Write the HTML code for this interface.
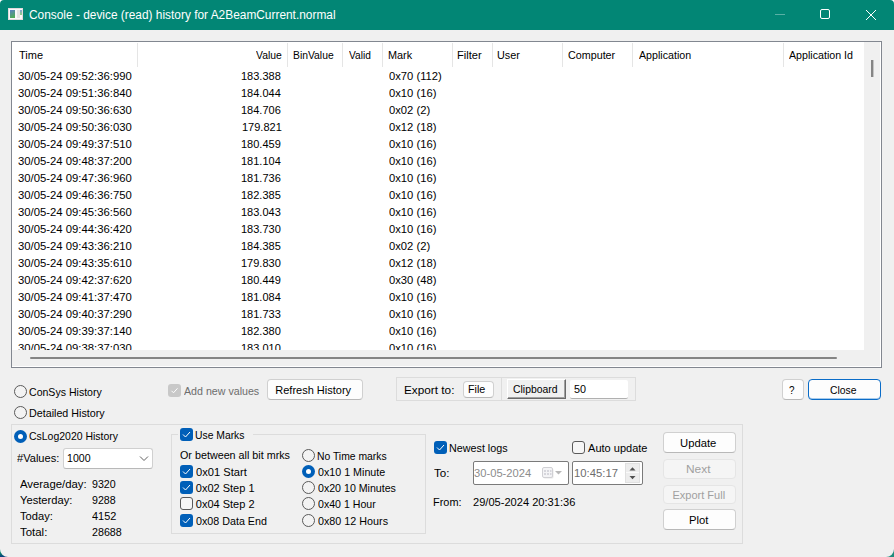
<!DOCTYPE html>
<html><head><meta charset="utf-8"><style>
*{box-sizing:border-box;margin:0;padding:0}
html,body{width:894px;height:557px;overflow:hidden;background:#f0f0f0}
body{position:relative;font-family:"Liberation Sans",sans-serif;font-size:11px;line-height:13px;color:#000}
.a{position:absolute}
.t{position:absolute;white-space:pre;transform-origin:0 0}
.lv{position:absolute;left:11px;top:41px;width:871px;height:327px;border:1px solid #828790;background:#fff}
.sep{position:absolute;top:43px;width:1px;height:24px;background:#e5e5e5}
.btn{position:absolute;background:#fdfdfd;border:1px solid #d0d0d0;border-bottom-color:#b8b8b8;border-radius:4px}
.grp{position:absolute;border:1px solid #dcdcdc}
.cb{position:absolute;width:13px;height:13px;border-radius:3px}
.cbon{background:#005fb8}
.cboff{border:1px solid #5a5a5a;background:#f6f6f6}
.rd{position:absolute;width:13px;height:13px;border-radius:50%;border:1px solid #5a5a5a;background:#f3f3f3}
.rdon{background:#005fb8;border:none}
.rdon::after{content:"";position:absolute;left:4px;top:4px;width:5px;height:5px;border-radius:50%;background:#fff}
</style></head><body>
<div class="a" style="left:0;top:0;width:894px;height:30px;background:#028675"></div>
<svg class="a" style="left:8px;top:8px" width="15" height="12" viewBox="0 0 15 12">
<defs><linearGradient id="g1" x1="0" y1="0" x2="0.3" y2="1"><stop offset="0" stop-color="#5a7fc4"/><stop offset="1" stop-color="#4faa5a"/></linearGradient>
<linearGradient id="g2" x1="0" y1="0" x2="0" y2="1"><stop offset="0" stop-color="#7f9fd4"/><stop offset="1" stop-color="#8fd07f"/></linearGradient></defs>
<rect x="0.5" y="0.5" width="14" height="11" fill="#f9f9f9" stroke="#e2dadd"/>
<rect x="2" y="2" width="5" height="8" fill="url(#g1)"/>
<rect x="9" y="2" width="3" height="8" fill="#e4e4e4"/>
<rect x="12" y="2" width="2" height="5" fill="url(#g2)"/>
</svg>
<div class="a" style="left:775px;top:14px;width:10px;height:1px;background:rgba(255,255,255,0.35)"></div>
<div class="a" style="left:820px;top:9px;width:10px;height:10px;border:1px solid #fff;border-radius:2px"></div>
<svg class="a" style="left:865px;top:9px" width="12" height="12" viewBox="0 0 12 12"><path d="M1 1L11 11M11 1L1 11" stroke="#fff" stroke-width="1"/></svg>
<div class="lv"></div>
<div class="sep" style="left:137px"></div>
<div class="sep" style="left:287px"></div>
<div class="sep" style="left:342px"></div>
<div class="sep" style="left:382px"></div>
<div class="sep" style="left:452px"></div>
<div class="sep" style="left:492px"></div>
<div class="sep" style="left:562px"></div>
<div class="sep" style="left:632px"></div>
<div class="sep" style="left:783px"></div>
<div class="a" style="left:12px;top:42px;width:852px;height:308px;overflow:hidden">
<div class="t" style="left:5.97px;top:28px;transform:scaleX(1.0275)">30/05-24 09:52:36:990</div>
<div class="t" style="left:229.00px;top:28px">183.388</div>
<div class="t" style="left:376.70px;top:28px;transform:scaleX(1.0200)">0x70 (112)</div>
<div class="t" style="left:5.97px;top:45px;transform:scaleX(1.0275)">30/05-24 09:51:36:840</div>
<div class="t" style="left:229.00px;top:45px">184.044</div>
<div class="t" style="left:376.70px;top:45px;transform:scaleX(1.0200)">0x10 (16)</div>
<div class="t" style="left:5.97px;top:62px;transform:scaleX(1.0275)">30/05-24 09:50:36:630</div>
<div class="t" style="left:229.00px;top:62px">184.706</div>
<div class="t" style="left:376.70px;top:62px;transform:scaleX(1.0200)">0x02 (2)</div>
<div class="t" style="left:5.97px;top:79px;transform:scaleX(1.0275)">30/05-24 09:50:36:030</div>
<div class="t" style="left:230.00px;top:79px">179.821</div>
<div class="t" style="left:376.70px;top:79px;transform:scaleX(1.0200)">0x12 (18)</div>
<div class="t" style="left:5.97px;top:96px;transform:scaleX(1.0275)">30/05-24 09:49:37:510</div>
<div class="t" style="left:229.00px;top:96px">180.459</div>
<div class="t" style="left:376.70px;top:96px;transform:scaleX(1.0200)">0x10 (16)</div>
<div class="t" style="left:5.97px;top:113px;transform:scaleX(1.0275)">30/05-24 09:48:37:200</div>
<div class="t" style="left:229.00px;top:113px">181.104</div>
<div class="t" style="left:376.70px;top:113px;transform:scaleX(1.0200)">0x10 (16)</div>
<div class="t" style="left:5.97px;top:130px;transform:scaleX(1.0275)">30/05-24 09:47:36:960</div>
<div class="t" style="left:229.00px;top:130px">181.736</div>
<div class="t" style="left:376.70px;top:130px;transform:scaleX(1.0200)">0x10 (16)</div>
<div class="t" style="left:5.97px;top:147px;transform:scaleX(1.0275)">30/05-24 09:46:36:750</div>
<div class="t" style="left:229.00px;top:147px">182.385</div>
<div class="t" style="left:376.70px;top:147px;transform:scaleX(1.0200)">0x10 (16)</div>
<div class="t" style="left:5.97px;top:164px;transform:scaleX(1.0275)">30/05-24 09:45:36:560</div>
<div class="t" style="left:229.00px;top:164px">183.043</div>
<div class="t" style="left:376.70px;top:164px;transform:scaleX(1.0200)">0x10 (16)</div>
<div class="t" style="left:5.97px;top:181px;transform:scaleX(1.0275)">30/05-24 09:44:36:420</div>
<div class="t" style="left:229.00px;top:181px">183.730</div>
<div class="t" style="left:376.70px;top:181px;transform:scaleX(1.0200)">0x10 (16)</div>
<div class="t" style="left:5.97px;top:198px;transform:scaleX(1.0275)">30/05-24 09:43:36:210</div>
<div class="t" style="left:229.00px;top:198px">184.385</div>
<div class="t" style="left:376.70px;top:198px;transform:scaleX(1.0200)">0x02 (2)</div>
<div class="t" style="left:5.97px;top:215px;transform:scaleX(1.0275)">30/05-24 09:43:35:610</div>
<div class="t" style="left:229.00px;top:215px">179.830</div>
<div class="t" style="left:376.70px;top:215px;transform:scaleX(1.0200)">0x12 (18)</div>
<div class="t" style="left:5.97px;top:232px;transform:scaleX(1.0275)">30/05-24 09:42:37:620</div>
<div class="t" style="left:229.00px;top:232px">180.449</div>
<div class="t" style="left:376.70px;top:232px;transform:scaleX(1.0200)">0x30 (48)</div>
<div class="t" style="left:5.97px;top:249px;transform:scaleX(1.0275)">30/05-24 09:41:37:470</div>
<div class="t" style="left:229.00px;top:249px">181.084</div>
<div class="t" style="left:376.70px;top:249px;transform:scaleX(1.0200)">0x10 (16)</div>
<div class="t" style="left:5.97px;top:266px;transform:scaleX(1.0275)">30/05-24 09:40:37:290</div>
<div class="t" style="left:229.00px;top:266px">181.733</div>
<div class="t" style="left:376.70px;top:266px;transform:scaleX(1.0200)">0x10 (16)</div>
<div class="t" style="left:5.97px;top:283px;transform:scaleX(1.0275)">30/05-24 09:39:37:140</div>
<div class="t" style="left:229.00px;top:283px">182.380</div>
<div class="t" style="left:376.70px;top:283px;transform:scaleX(1.0200)">0x10 (16)</div>
<div class="t" style="left:5.97px;top:300px;transform:scaleX(1.0275)">30/05-24 09:38:37:030</div>
<div class="t" style="left:229.00px;top:300px">183.010</div>
<div class="t" style="left:376.70px;top:300px;transform:scaleX(1.0200)">0x10 (16)</div>
</div>
<div class="a" style="left:864px;top:42px;width:16px;height:308px;background:#f0f0f0"></div>
<div class="a" style="left:871px;top:60px;width:2px;height:17px;background:#858585;box-shadow:1px 0 0 rgba(133,133,133,0.4)"></div>
<div class="a" style="left:12px;top:350px;width:868px;height:16px;background:#f0f0f0"></div>
<div class="a" style="left:30px;top:357px;width:807px;height:2px;background:#858585;border-radius:1px"></div>
<div class="rd" style="left:14px;top:385px"></div>
<div class="rd" style="left:14px;top:406px"></div>
<div class="cb" style="left:168px;top:384px;background:#c8c8c8"></div>
<svg class="a" style="left:168px;top:384px" width="13" height="13"><path d="M3.5 6.8L5.5 8.8L9.5 4.3" fill="none" stroke="#fff" stroke-width="1"/></svg>
<div class="btn" style="left:267px;top:379px;width:96px;height:21px"></div>
<div class="a" style="left:396px;top:377px;width:240px;height:24px;border:1px solid #dcdcdc"></div>
<div class="btn" style="left:463px;top:381px;width:31px;height:17px"></div>
<div class="a" style="left:501px;top:378px;width:1px;height:22px;background:#dcdcdc"></div>
<div class="a" style="left:507px;top:379px;width:59px;height:20px;background:#f0f0f0;border-top:1px solid #fff;border-left:1px solid #fff;border-right:1px solid #696969;border-bottom:1px solid #696969;box-shadow:inset -1px -1px 0 #a0a0a0"></div>
<div class="a" style="left:570px;top:380px;width:58px;height:19px;background:#fff;border-bottom:1px solid #b0b0b0;border-radius:2px"></div>
<div class="btn" style="left:782px;top:379px;width:22px;height:21px"></div>
<div class="a" style="left:808px;top:379px;width:73px;height:21px;background:#fdfdfd;border:1px solid #0a6cc8;border-radius:4px;box-shadow:inset 0 -1px 0 rgba(10,108,200,0.35)"></div>
<div class="grp" style="left:11px;top:424px;width:732px;height:120px"></div>
<div class="rd rdon" style="left:14px;top:430px"></div>
<div class="a" style="left:63px;top:448px;width:90px;height:21px;background:#fff;border:1px solid #d0d0d0;border-bottom-color:#b8b8b8;border-radius:3px"></div>
<svg class="a" style="left:139px;top:456px" width="10" height="6"><path d="M1 0.5L5 4.5L9 0.5" fill="none" stroke="#606060" stroke-width="1"/></svg>
<div class="grp" style="left:171px;top:434px;width:255px;height:100px"></div>
<div class="a" style="left:178px;top:430px;width:75px;height:10px;background:#f0f0f0"></div>
<div class="cb cbon" style="left:180px;top:428px"></div><svg class="a" style="left:180px;top:428px" width="13" height="13"><path d="M3 6.5L5.5 9L10 4" fill="none" stroke="#fff" stroke-width="1"/></svg>
<div class="cb cbon" style="left:180px;top:465px"></div><svg class="a" style="left:180px;top:465px" width="13" height="13"><path d="M3 6.5L5.5 9L10 4" fill="none" stroke="#fff" stroke-width="1"/></svg>
<div class="cb cbon" style="left:180px;top:481px"></div><svg class="a" style="left:180px;top:481px" width="13" height="13"><path d="M3 6.5L5.5 9L10 4" fill="none" stroke="#fff" stroke-width="1"/></svg>
<div class="cb cboff" style="left:180px;top:497px"></div>
<div class="cb cbon" style="left:180px;top:514px"></div><svg class="a" style="left:180px;top:514px" width="13" height="13"><path d="M3 6.5L5.5 9L10 4" fill="none" stroke="#fff" stroke-width="1"/></svg>
<div class="rd " style="left:302px;top:449px"></div>
<div class="rd rdon" style="left:302px;top:465px"></div>
<div class="rd " style="left:302px;top:481px"></div>
<div class="rd " style="left:302px;top:497px"></div>
<div class="rd " style="left:302px;top:514px"></div>
<div class="cb cbon" style="left:434px;top:441px"></div><svg class="a" style="left:434px;top:441px" width="13" height="13"><path d="M3 6.5L5.5 9L10 4" fill="none" stroke="#fff" stroke-width="1"/></svg>
<div class="cb cboff" style="left:572px;top:441px"></div>
<div class="a" style="left:473px;top:461px;width:96px;height:24px;background:#fff;border:1px solid #7a7a7a;border-radius:2px"></div>
<div class="a" style="left:572px;top:461px;width:71px;height:24px;background:#fff;border:1px solid #7a7a7a;border-radius:2px"></div>
<svg class="a" style="left:541px;top:466px" width="24" height="14" viewBox="0 0 24 14">
<rect x="2.5" y="2.5" width="10" height="10" rx="1.5" fill="#d8d8d8" opacity="0.6"/>
<rect x="1.5" y="1.5" width="10" height="10" rx="1.5" fill="#f4f4f6" stroke="#d0d0d4"/>
<g fill="#d6d6dc"><rect x="3" y="4" width="2" height="2"/><rect x="6" y="4" width="2" height="2"/><rect x="9" y="4" width="1.5" height="2"/>
<rect x="3" y="7" width="2" height="2"/><rect x="6" y="7" width="2" height="2"/><rect x="9" y="7" width="1.5" height="2"/></g>
<path d="M14 5L21 5L17.5 8.6Z" fill="#b8b8b8"/>
</svg><div class="a" style="left:625px;top:463px;width:15px;height:20px;background:#ededed;border:1px solid #e0e0e0"></div>
<div class="a" style="left:626px;top:472px;width:13px;height:1px;background:#fafafa"></div>
<svg class="a" style="left:625px;top:463px" width="15" height="20" viewBox="0 0 15 20"><path d="M4.5 7.5L10.5 7.5L7.5 4.2Z" fill="#505050"/><path d="M4.5 13L10.5 13L7.5 16.3Z" fill="#505050"/></svg><div class="btn" style="left:663px;top:432px;width:73px;height:21px"></div>
<div class="btn" style="left:663px;top:459px;width:73px;height:20px;background:#f5f5f5;border-color:#e5e5e5"></div>
<div class="btn" style="left:663px;top:485px;width:73px;height:19px;background:#f5f5f5;border-color:#e5e5e5"></div>
<div class="btn" style="left:663px;top:509px;width:73px;height:21px"></div>
<div class="t" style="left:29.41px;top:9px;color:#fff;font-size:12px;transform:scaleX(0.9906)">Console - device (read) history for A2BeamCurrent.normal</div>
<div class="t" style="left:19.00px;top:49px">Time</div>
<div class="t" style="left:255.50px;top:49px;transform:scaleX(0.9444)">Value</div>
<div class="t" style="left:292.56px;top:49px;transform:scaleX(0.9405)">BinValue</div>
<div class="t" style="left:349.00px;top:49px;transform:scaleX(0.9217)">Valid</div>
<div class="t" style="left:387.71px;top:49px;transform:scaleX(0.9870)">Mark</div>
<div class="t" style="left:457.49px;top:49px;transform:scaleX(1.0087)">Filter</div>
<div class="t" style="left:497.31px;top:49px;transform:scaleX(0.9864)">User</div>
<div class="t" style="left:567.72px;top:49px;transform:scaleX(0.9766)">Computer</div>
<div class="t" style="left:638.80px;top:49px;transform:scaleX(0.9679)">Application</div>
<div class="t" style="left:789.00px;top:49px;transform:scaleX(0.9682)">Application Id</div>
<div class="t" style="left:29.04px;top:386px;transform:scaleX(0.9600)">ConSys History</div>
<div class="t" style="left:29.03px;top:407px;transform:scaleX(0.9740)">Detailed History</div>
<div class="t" style="left:184.00px;top:385px;color:#6d6d6d;transform:scaleX(0.9679)">Add new values</div>
<div class="t" style="left:275.30px;top:384px">Refresh History</div>
<div class="t" style="left:403.53px;top:384px;transform:scaleX(1.0711)">Export to:</div>
<div class="t" style="left:468.42px;top:383px;transform:scaleX(0.9750)">File</div>
<div class="t" style="left:512.55px;top:383px;transform:scaleX(0.9457)">Clipboard</div>
<div class="t" style="left:574.22px;top:383px;transform:scaleX(0.9818)">50</div>
<div class="t" style="left:788.90px;top:384px;transform:scaleX(0.9000)">?</div>
<div class="t" style="left:829.66px;top:384px;transform:scaleX(0.9407)">Close</div>
<div class="t" style="left:29.05px;top:430px;transform:scaleX(0.9516)">CsLog2020 History</div>
<div class="t" style="left:17.40px;top:452px;transform:scaleX(1.0073)">#Values:</div>
<div class="t" style="left:66.84px;top:452px;transform:scaleX(0.9609)">1000</div>
<div class="t" style="left:20.00px;top:478px;transform:scaleX(1.0312)">Average/day:</div>
<div class="t" style="left:92.00px;top:478px;transform:scaleX(0.9667)">9320</div>
<div class="t" style="left:20.00px;top:494px;transform:scaleX(1.0157)">Yesterday:</div>
<div class="t" style="left:92.00px;top:494px;transform:scaleX(0.9667)">9288</div>
<div class="t" style="left:20.00px;top:510px;transform:scaleX(1.0125)">Today:</div>
<div class="t" style="left:92.00px;top:510px;transform:scaleX(0.9917)">4152</div>
<div class="t" style="left:20.00px;top:526px;transform:scaleX(1.0385)">Total:</div>
<div class="t" style="left:92.00px;top:526px;transform:scaleX(0.9733)">28688</div>
<div class="t" style="left:195.06px;top:429px;transform:scaleX(0.9412)">Use Marks</div>
<div class="t" style="left:179.70px;top:449px;transform:scaleX(0.9777)">Or between all bit mrks</div>
<div class="t" style="left:195.80px;top:466px;transform:scaleX(1.0120)">0x01 Start</div>
<div class="t" style="left:195.80px;top:482px">0x02 Step 1</div>
<div class="t" style="left:195.80px;top:498px">0x04 Step 2</div>
<div class="t" style="left:195.80px;top:515px;transform:scaleX(0.9750)">0x08 Data End</div>
<div class="t" style="left:316.86px;top:450px;transform:scaleX(0.9411)">No Time marks</div>
<div class="t" style="left:317.80px;top:466px;transform:scaleX(0.9725)">0x10 1 Minute</div>
<div class="t" style="left:317.80px;top:482px;transform:scaleX(0.9654)">0x20 10 Minutes</div>
<div class="t" style="left:317.80px;top:498px;transform:scaleX(0.9633)">0x40 1 Hour</div>
<div class="t" style="left:317.80px;top:515px;transform:scaleX(0.9789)">0x80 12 Hours</div>
<div class="t" style="left:448.62px;top:442px;transform:scaleX(0.9780)">Newest logs</div>
<div class="t" style="left:588.10px;top:442px">Auto update</div>
<div class="t" style="left:434.00px;top:467px;transform:scaleX(1.0571)">To:</div>
<div class="t" style="left:474.08px;top:467px;color:#8c8c8c;transform:scaleX(1.0164)">30-05-2024</div>
<div class="t" style="left:573.77px;top:467px;color:#6d6d6d;transform:scaleX(1.0262)">10:45:17</div>
<div class="t" style="left:433.01px;top:496px;transform:scaleX(0.9926)">From:</div>
<div class="t" style="left:473.30px;top:496px;transform:scaleX(1.0079)">29/05-2024 20:31:36</div>
<div class="t" style="left:680.28px;top:437px;transform:scaleX(1.0235)">Update</div>
<div class="t" style="left:686.12px;top:463px;color:#a0a0a0;transform:scaleX(1.0818)">Next</div>
<div class="t" style="left:672.50px;top:489px;color:#a0a0a0">Export Full</div>
<div class="t" style="left:688.68px;top:514px;transform:scaleX(1.0222)">Plot</div>
<svg class="a" style="left:0;top:0" width="894" height="557" viewBox="0 0 894 557">
<defs><linearGradient id="gc" x1="0" y1="0" x2="0" y2="1"><stop offset="0" stop-color="#3aa596"/><stop offset="0.5" stop-color="#0b7f6a"/><stop offset="1" stop-color="#0a3a80"/></linearGradient></defs>
<path d="M0 0L4 0A4 4 0 0 0 0 4Z" fill="#fff"/>
<path d="M894 0L890 0A4 4 0 0 1 894 4Z" fill="#fff"/>
<path d="M0 549A8 8 0 0 0 8 557L0 557Z" fill="url(#gc)"/>
<path d="M894 549A8 8 0 0 1 886 557L894 557Z" fill="#1f8c7c"/>
</svg></body></html>
